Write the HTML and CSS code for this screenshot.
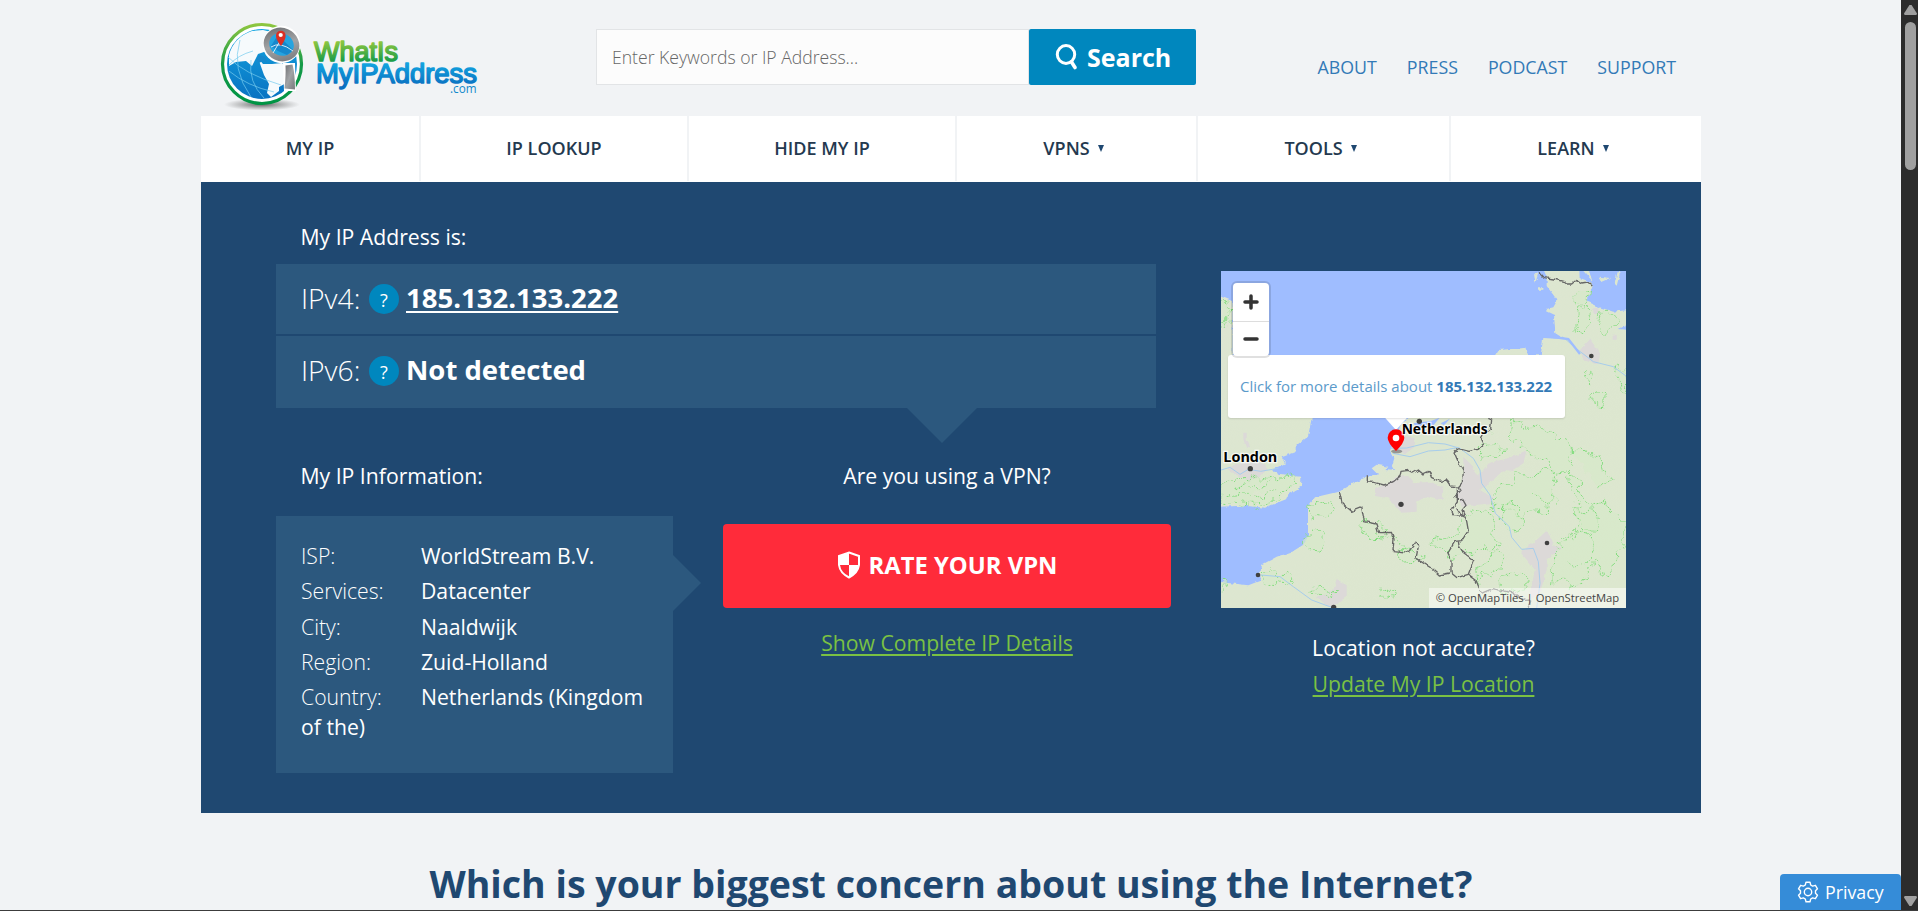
FILE: index.html
```html
<!DOCTYPE html>
<html lang="en">
<head>
<meta charset="utf-8">
<title>What Is My IP Address</title>
<link rel="stylesheet" href="styles.css">
</head>
<body>
<div class="page">
  <div class="container">
    <header class="header">
      <a class="logo">
        <svg width="290" height="100" viewBox="210 10 290 100">
          <defs>
            <linearGradient id="ring" x1="0" y1="0" x2="0" y2="1"><stop offset="0" stop-color="#8dc63f"/><stop offset=".5" stop-color="#159a48"/><stop offset="1" stop-color="#009444"/></linearGradient>
            <linearGradient id="sea" x1="0" y1="0" x2="0" y2="1"><stop offset="0" stop-color="#12a5e0"/><stop offset="1" stop-color="#0a72c2"/></linearGradient>
            <linearGradient id="steel" x1="0" y1="0" x2="1" y2="1"><stop offset="0" stop-color="#6d6e71"/><stop offset=".5" stop-color="#a2a4a6"/><stop offset="1" stop-color="#77787b"/></linearGradient>
            <radialGradient id="shade"><stop offset="0" stop-color="#555" stop-opacity=".9"/><stop offset="1" stop-color="#777" stop-opacity="0"/></radialGradient>
            <linearGradient id="green" gradientUnits="userSpaceOnUse" x1="0" y1="42" x2="0" y2="62"><stop offset="0" stop-color="#8dc63f"/><stop offset="1" stop-color="#159a48"/></linearGradient>
            <linearGradient id="blue" gradientUnits="userSpaceOnUse" x1="0" y1="63" x2="0" y2="86"><stop offset="0" stop-color="#12a5e0"/><stop offset="1" stop-color="#0a6fc0"/></linearGradient>
          </defs>
          <ellipse cx="262" cy="104.500" rx="38" ry="6" fill="url(#shade)"/>
          <circle cx="262" cy="64" r="39.500" fill="#fff" stroke="url(#ring)" stroke-width="3.200"/>
          <circle cx="262" cy="64" r="35" fill="url(#sea)"/>
          <path d="M229 55Q234 37 252 31L263 30 271 32 276 40 268 44 268 50 264 52 258 54 255 60 252 66 246 61 236 62 229 66Z" fill="#f6fafc"/>
          <path d="M258 58L263 64 272 64 282 63 292 72 288 82 279 87 279 91 271 97 267 93 269 84 264 75Z" fill="#f6fafc"/>
          <path d="M228 57Q244 74 281 85M229 71Q247 86 274 92M240 40Q231 69 251 97M251 60Q248 82 264 98M229 65Q238 55 253 51" fill="none" stroke="#75cbee" stroke-width=".7"/>
          <path d="M256 60l3-5 6 2 2 5-4-1-4 2z" fill="#1688cc"/>
          <path d="M283 63H295L296 91H284Z" fill="#fff"/>
          <circle cx="281.500" cy="44.500" r="18.800" fill="#fff"/>
          <ellipse cx="281.500" cy="44.500" rx="15.300" ry="13.800" transform="rotate(25 281.500 44.500)" fill="#25a4e0" stroke="url(#steel)" stroke-width="5.500"/>
          <path d="M271 46l5-8 8 3 9 9-6 5-9-4z" fill="#1688cc"/>
          <path d="M271 47q9-6 22 4M273 53l10-17" fill="none" stroke="#fff" stroke-width=".8"/>
          <path d="M285.500 65.500L292.500 64.500Q295 74 295 89.500L284.500 88.500Q286 75 285.500 65.500Z" fill="url(#steel)"/>
          <path d="M281 46Q275.500 39 276 35.500A4.800 4.800 0 0 1 285.600 35.500Q286 39 281 46Z" fill="#da3024"/>
          <circle cx="280.700" cy="35" r="2.100" fill="#fff"/>
          <text class="logo-text" x="314" y="60.500" textLength="84" lengthAdjust="spacingAndGlyphs" fill="url(#green)" stroke="url(#green)">WhatIs</text>
          <text class="logo-text" x="316" y="82.500" textLength="161" lengthAdjust="spacingAndGlyphs" fill="url(#blue)" stroke="url(#blue)">MyIPAddress</text>
          <text class="logo-com" x="450" y="92.500" textLength="26.500" lengthAdjust="spacingAndGlyphs">.com</text>
        </svg>
      </a>
      <form class="search">
        <div class="search-field">Enter Keywords or IP Address...</div>
        <div class="search-button">
          <svg width="24" height="28" viewBox="0 0 24 28"><ellipse cx="11" cy="11.500" rx="8.700" ry="8.900" fill="none" stroke="#fff" stroke-width="3"/><path d="M16.500 19L20 24.500" stroke="#fff" stroke-width="3.600" stroke-linecap="round"/></svg>
          <span>Search</span>
        </div>
      </form>
      <nav class="top-links"><a>ABOUT</a><a>PRESS</a><a>PODCAST</a><a>SUPPORT</a></nav>
    </header>
    <nav class="main-nav">
      <a>MY IP</a><a>IP LOOKUP</a><a>HIDE MY IP</a>
      <a>VPNS <i class="caret"></i></a><a>TOOLS <i class="caret"></i></a><a>LEARN <i class="caret"></i></a>
    </nav>
    <main class="panel">
      <section class="details">
        <h2 class="label">My IP Address is:</h2>
        <div class="addresses">
          <div class="address"><span class="version">IPv4:</span><span class="help">?</span><a class="ip">185.132.133.222</a></div>
          <div class="address"><span class="version">IPv6:</span><span class="help">?</span><b>Not detected</b></div>
        </div>
        <div class="columns">
          <div class="information">
            <h2 class="label">My IP Information:</h2>
            <div class="info-card">
              <p><span>ISP:</span>WorldStream B.V.</p>
              <p><span>Services:</span>Datacenter</p>
              <p><span>City:</span>Naaldwijk</p>
              <p><span>Region:</span>Zuid-Holland</p>
              <p><span>Country:</span>Netherlands (Kingdom of the)</p>
            </div>
          </div>
          <div class="vpn">
            <p class="question">Are you using a VPN?</p>
            <a class="rate">
              <svg width="24" height="28" viewBox="0 0 24 28"><path d="M12 1.500L22 5V14Q21 22 12 26.500Q3 22 2 14V5Z" fill="none" stroke="#fff" stroke-width="2"/><path d="M12 1.500V14H2V5ZM12 14H22Q21 22 12 26.500Z" fill="#fff"/></svg>
              <span>RATE YOUR VPN</span>
            </a>
            <a class="green-link">Show Complete IP Details</a>
          </div>
        </div>
      </section>
      <aside class="location">
        <div class="map">
          <svg class="map-art" width="405" height="337" viewBox="63 63 1215 1011">
            <defs>
              <linearGradient id="land" x1="0" y1="0" x2="1" y2="1"><stop offset="0" stop-color="#dde5d2"/><stop offset="1" stop-color="#dce7ce"/></linearGradient>
              <filter id="rough" x="0" y="0" width="1" height="1"><feTurbulence type="fractalNoise" baseFrequency=".035" numOctaves="2" seed="4"/><feDisplacementMap in="SourceGraphic" scale="42" xChannelSelector="R" yChannelSelector="G"/></filter>
              <filter id="coast" x="0" y="0" width="1" height="1"><feTurbulence type="fractalNoise" baseFrequency=".06" numOctaves="2" seed="9"/><feDisplacementMap in="SourceGraphic" scale="12" xChannelSelector="R" yChannelSelector="G"/></filter>
            </defs>
            <path fill="#9fbdff" d="M63 63H1278V1074H63Z"/>
            <g fill="url(#land)" filter="url(#coast)">
              <path d="M40 130L98 154V320H240L335 505 324 560 290 585V605L245 622 255 640 215 660 240 675 304 680 303 710 265 733 258 748 195 773 130 767 40 771Z"/>
              <path d="M40 994L145 1006 184 991 177 968 188 943 230 920 280 903 310 884 324 856V770L345 742 415 725 460 698 502 678 540 672 590 677 575 650 583 625 570 603 600 530 625 500 700 480 885 316 895 300 975 294 985 316H1022L1030 264 1095 268 1066 250 1062 195 1038 184 1042 176 1060 172 1072 151 1040 108V80L1022 40H1140L1142 85 1170 95 1178 108 1160 155 1194 170 1240 185 1300 178V216L1256 237 1300 242V1100H40Z"/>
              <path d="M1002 72L1015 70 1006 98ZM1014 112h16v7h-16ZM1150 63l27 30-10-30ZM1198 80l36 4-28 12ZM1243 104l10-38 7 2-10 40Z"/>
              <path d="M515 655L530 644 565 650 556 660 590 664 596 677 565 681 530 670Z"/>
            </g>
            <path d="M640 520l55-8 24-9-18 22-50 8zM722 520l28-14-18 20z" fill="#9fbdff"/>
            <g fill="#dcd9d8" filter="url(#coast)">
              <path d="M80 655L110 640 180 637 205 655 180 680 155 695 115 680Z"/>
              <path d="M525 712L560 704 590 680 625 678 640 700 690 695 730 710 728 750 680 738 650 756 650 785 605 788 565 745 525 738Z"/>
              <path d="M790 620L820 650 835 680 870 638 940 620 980 600 970 640 930 665 910 660 880 690 840 720 882 745 870 760 785 770 770 735 790 690Z"/>
              <path d="M580 605L600 560 640 560 645 590 615 612ZM960 905L1000 880 1042 840 1060 885 1090 895 1040 925 1040 960 1020 1030 985 1050 1005 960Z"/>
              <path d="M1140 300L1170 268 1200 310 1195 345 1150 330ZM350 1040L400 1020 410 990 440 1005 440 1040 390 1074ZM130 548h10v18l8 15v12h-10l-8-25ZM1180 180l15-8v20h-15ZM1238 255l12-4v18h-12Z"/>
            </g>
            <g class="forest" filter="url(#rough)">
              <path d="M63 160l24-5-10 20 18 8-15 20 3 20-20 8M68 710l35-28 30 12 40-14 48 8 48-8 33 17-47 30-24 22-48 20-70-8-45-6zM100 720l48-17 30 14 38-24M80 740l65-14 34 14 52-20"/>
              <path d="M326 770l28-17 42 4 8 25-28 20-45-4zM310 885l10-38 25-6 30 23-8 34-38 2zM478 832l14-24 48 15 30 17-10 24-44-2zM520 850l40 20 24-10 28 40 38 12M590 910l40-10 38 24-30 14-42-4z"/>
              <path d="M790 800l25-20 28 10 20-8 20 40-8 40 20 20-20 18-20-14-35 28-28-13-30 22-38-23-33-20 12-22 50 8 24-20zM885 750l15-50 35 10 14-46 45 14 35-24 33 20-8 38 12 30-26 22 4 22-50-8-32 26-25-24-55 2zM930 510l36 10 10 18 30-7 38 9 50 28 20 40-10 60-40 5-22-40-46-14-24-32-28-12-14-38z"/>
              <path d="M830 620l10-25 48-12 28 18-18 22-36-8-20 14zM1108 670l28 18 4 38 35 40 38-12 20 32 45 34v70l-35 25-10 68-35-13-10-40-20 25-22 45-38 8-15-22-38 20 3-53 20-32-10-28 30-20 33-40-5-35 18-28-28-40zM1080 860l40 12 8-30 40 8 22 36-16 44-47 20-30-8M830 950l35-18 22-38 20 18-7 44-28 20-20-8-18 38zM900 1000l20-28 40-8 25 20-8 30-45 8-30 14z"/>
              <path d="M1122 145l10-20 34 3-4 26-38 8zM1134 188l10-22 28 12-4 32-20 36-20-10zM1198 200l22-18 18 15 18 12-14 22-32 20-14-14zM1154 380l12-18 14 18-14 22zM1176 435l25-10 14 10v32l-38-8zM1255 345l20 18 3 70-15-14-2-28-12-14zM1114 600l34-12 14 22 40 8 5 45 32 18-20 28-28-2M536 1030l10-16 40 12 3 20-45-8zM328 1022l25-8 48 8-8 20-52-4zM180 965l34-5 28 18 24-8 14 22-24 12-38-4-28 10zM63 1000l17 2-17 17"/>
              <path d="M910 765l28-5 24 14-4 28 12 24-22 28-24-18-22-35zM1120 780l35 10 18-20 28 40-18 35-35-7zM1000 730l35 30 20-12 20 20M850 540l23 2M940 515l30 2"/>
            </g>
            <g fill="none" stroke="#a7cdec" stroke-width="3">
              <path d="M63 660L90 652 120 673 145 658 182 664 235 655M570 595L620 594 685 578 735 582 780 595 820 625 840 660 845 700 870 735 886 790 928 830 935 862 965 898 1000 895 1015 935 1020 1000 1010 1074M578 610L630 620 685 603 735 600 775 592M182 975L240 980 280 1010 335 1050 400 1074M1095 266L1125 293 1180 335 1240 350 1278 378"/>
              <path d="M1060 261L1105 267 1140 312" stroke="#9fbdff" stroke-width="7"/>
            </g>
            <g class="border" filter="url(#coast)">
              <path d="M1017 65l16 18 28 4 28 7 11 8 15 0 15-13 15 10 18-3 14 12M418 724l8 35 29 25 30-12 8 43 35 7 8 26 38-1 8 20-3 35 45 5 25-32 7 10-8 40 50 32 20 18 32-6"/>
              <path d="M502 676v20l20 1 30 8 28-10 20-16 3-15 22-3 15 8 15-9 14 12 18-8 7 18 25 12 20-4 13 18 20 3v45l-18 25 6 13 33 2-7-15 12-15-10-18-10 2M865 505l10 5-3 25-22 18-8 15 8 15-15 15-28 6-32-8-13 10 14 32 14 24-3 35-12 14 8 10-22 22"/>
              <path d="M770 775l16 24 12 3 7 40-20 30-20 2-22 36 10 20v38l18 15 34-10 16-42-32-24-12-20-2-15M805 975l24 18 15 37 33-14 60 12 38 23 17-1-8 24"/>
            </g>
            <g fill="#404040"><circle cx="151" cy="656" r="8"/><circle cx="658" cy="514" r="8"/><circle cx="603" cy="763" r="8"/><circle cx="174" cy="975" r="7"/><circle cx="1041" cy="879" r="7"/><circle cx="1174" cy="318" r="7"/><circle cx="401" cy="1072" r="8"/></g>
            <ellipse cx="590" cy="604" rx="17" ry="6" fill="#777" opacity=".7"/>
            <path d="M553 501H623L588 540Z" fill="#fff"/>
            <path d="M588 603Q563 578 563 563A25 25 0 0 1 613 563Q613 578 588 603Z" fill="#f00"/><circle cx="588" cy="564" r="10" fill="#fff"/>
            <text class="place" x="605" y="552" textLength="258" lengthAdjust="spacingAndGlyphs">Netherlands</text>
            <text class="place" x="70" y="636" textLength="162" lengthAdjust="spacingAndGlyphs">London</text>
          </svg>
          <div class="popup">Click for more details about <b>185.132.133.222</b></div>
          <div class="zoom"><span><svg width="16" height="16"><path d="M8 2V14M2 8H14"/></svg></span><span><svg width="16" height="16"><path d="M2 8H14"/></svg></span></div>
          <div class="credits">© OpenMapTiles | OpenStreetMap</div>
        </div>
        <p class="accurate">Location not accurate?</p>
        <a class="green-link">Update My IP Location</a>
      </aside>
    </main>
    <h1 class="concern">Which is your biggest concern about using the Internet?</h1>
  </div>
</div>
<div class="privacy">
  <svg width="22" height="22" viewBox="0 0 22 22" fill="none" stroke="#fff" stroke-width="1.400" stroke-linejoin="round"><path d="M9 1.200H13L13.700 4 15.600 5.100 18.400 4.300 20.500 7.800 18.500 9.800V12.200L20.500 14.200 18.400 17.700 15.600 16.900 13.700 18 13 20.800H9L8.300 18 6.400 16.900 3.600 17.700 1.500 14.200 3.500 12.200V9.800L1.500 7.800 3.600 4.300 6.400 5.100 8.300 4Z"/><circle cx="11" cy="11" r="3.700"/></svg>
  <span>Privacy</span>
</div>
<div class="scrollbar"><i class="arrow-up"></i><i class="thumb"></i><i class="arrow-down"></i></div>
<div class="window-edge"></div>
</body>
</html>
```
FILE: styles.css
```css
* { box-sizing: border-box; }
html, body { margin: 0; height: 911px; overflow: hidden; }
body { background: #f1f3f5; color: #fff; font-family: "Open Sans", "Noto Sans", sans-serif; font-size: 21.200px; }
p, h1, h2 { margin: 0; font-weight: 400; }
.page { width: 1901px; height: 911px; overflow: hidden; }
.container { width: 1500px; margin: 0 auto 0 201px; }

.header { height: 116px; display: flex; align-items: flex-start; }
.logo { width: 395px; padding: 10px 0 0 9px; }
.logo svg { display: block; }
.logo-text { font: 400 27px "Liberation Sans", sans-serif; stroke-width: 1.500px; stroke-linejoin: round; }
.logo-com { font: 400 12.500px "Open Sans", sans-serif; fill: #1089cb; }
.search { display: flex; width: 600px; height: 56px; margin-top: 29px; }
.search-field { width: 433px; height: 56px; padding-left: 15px; border: 1px solid #e2e4e6; background: #fcfcfc; color: #666; font-size: 17.600px; font-weight: 300; line-height: 55px; }
.search-button { width: 167px; height: 56px; display: flex; align-items: center; padding-left: 26px; gap: 8px; border-radius: 2px; background: #0087be; font-size: 25px; font-weight: 700; }
.top-links { display: flex; gap: 30px; margin: 55px 0 0 121.500px; color: #337ab7; font-size: 17.800px; font-weight: 450; line-height: 25px; }

.main-nav { height: 66px; display: grid; grid-template-columns: 220px 268px 268px 241px 253px 250px; background: #fff; color: #24394f; font-size: 18px; font-weight: 620; }
.main-nav a { display: flex; align-items: center; justify-content: center; height: 65px; padding-bottom: 2px; border-right: 2px solid #f1f3f5; }
.main-nav a:last-child { border-right: 0; }
.caret { margin: 2px 6px 0 8px; border: 3.500px solid transparent; border-top: 7px solid #1f4871; border-bottom: 0; }

.panel { height: 631px; display: flex; background: #1f4871; }
.details { width: 895px; padding: 40px 0 0 75px; }
.label { padding-left: 24.500px; font-size: 21.200px; line-height: 30px; }
.addresses { position: relative; width: 880px; margin-top: 12px; }
.addresses::after { content: ""; position: absolute; left: 631px; top: 144px; border: 35px solid transparent; border-top-color: #2c587e; border-bottom: 0; }
.address { height: 70px; padding: 0 25px; display: flex; align-items: center; background: #2c587e; font-size: 27.500px; line-height: 36px; }
.address + .address { height: 72px; margin-top: 2px; padding-bottom: 2px; }
.version { width: 68px; margin-top: -2px; font-size: 28.200px; font-weight: 340; }
.help { width: 30px; height: 30px; margin-right: 7px; border-radius: 50%; background: #0087be; font-size: 18px; line-height: 32px; text-align: center; }
.ip, .address b { margin-top: -2px; font-weight: 700; }
.ip { text-decoration: underline; text-decoration-thickness: 2px; text-underline-offset: 3px; }
.columns { display: flex; gap: 50px; margin-top: 53px; }
.information { flex: none; width: 397px; }
.info-card { position: relative; height: 257px; margin-top: 25px; padding: 25px 25px 0; background: #2c587e; line-height: 30px; }
.info-card::after { content: ""; position: absolute; left: 397px; top: 39px; border: 28.500px solid transparent; border-left-color: #2c587e; border-right: 0; }
.info-card p { margin-bottom: 5.300px; }
.info-card span { display: inline-block; width: 120px; font-weight: 300; }
.vpn { width: 448px; flex: none; text-align: center; }
.question { line-height: 30px; }
.rate { height: 84px; margin: 33px 0 20px; padding-bottom: 3px; display: flex; align-items: center; justify-content: center; gap: 8px; border-radius: 4px; background: #ff2b3a; font-size: 23.800px; font-weight: 700; }
.green-link { color: #7ac143; line-height: 30px; text-decoration: underline; text-decoration-thickness: 2px; text-underline-offset: 3px; }
.location { width: 405px; margin: 89px 0 0 125px; text-align: center; }
.map { position: relative; width: 405px; height: 337px; overflow: hidden; }
.map-art { display: block; }
.forest { fill: #d5e9c8; fill-opacity: .65; stroke: #82dc7d; stroke-width: 3; stroke-dasharray: 6 4; }
.border { fill: none; stroke: #666; stroke-width: 4; stroke-linejoin: round; }
.place { font: 700 41px "Open Sans", sans-serif; fill: #000; stroke: #fff; stroke-width: 7px; stroke-opacity: .8; paint-order: stroke; }
.zoom { position: absolute; left: 12px; top: 12px; width: 36px; height: 73px; border-radius: 4px; background: #fff; box-shadow: 0 0 0 2px rgba(0,0,0,.12); }
.zoom span { height: 38px; display: flex; align-items: center; justify-content: center; }
.zoom span + span { height: 35px; border-top: 1px solid #ddd; }
.zoom path { stroke: #333; stroke-width: 3.500; stroke-linecap: round; }
.popup { position: absolute; left: 7px; top: 84px; width: 337px; height: 63px; padding-left: 12px; border-radius: 3px; background: #fff; box-shadow: 0 1px 2px rgba(0,0,0,.12); color: #5b9aca; font-size: 15px; line-height: 62px; text-align: left; white-space: nowrap; }
.popup b { color: #337ab7; font-weight: 700; }
.credits { position: absolute; right: 0; bottom: 0; width: 197px; height: 20px; background: rgba(255,255,255,.5); color: #444; font-size: 11.250px; line-height: 20px; white-space: nowrap; }
.accurate { margin-top: 24px; line-height: 32px; }
.location .green-link { display: block; margin-top: 5px; }

.concern { margin-top: 42px; color: #1f4871; font-size: 37.500px; font-weight: 700; line-height: 58px; text-align: center; white-space: nowrap; }
.privacy { position: absolute; left: 1780px; top: 874px; width: 121px; height: 36px; display: flex; align-items: center; padding-left: 17px; gap: 6px; border-radius: 4px 4px 0 0; background: #358cd8; font-size: 17.800px; }
.scrollbar { position: absolute; left: 1901px; top: 0; width: 17px; height: 911px; background: #2c2c2c; }
.arrow-up, .arrow-down, .thumb { position: absolute; }
.arrow-up { left: 3px; top: 5px; width: 13px; height: 10px; background: #a0a0a0; clip-path: polygon(42% 0, 58% 0, 100% 85%, 95% 100%, 5% 100%, 0 85%); }
.thumb { left: 4px; top: 22px; width: 11px; height: 148px; border-radius: 6px; background: #a0a0a0; }
.arrow-down { left: 3px; top: 896px; width: 13px; height: 10px; background: #a0a0a0; clip-path: polygon(42% 100%, 58% 100%, 100% 15%, 95% 0, 5% 0, 0 15%); }
.window-edge { position: absolute; left: 0; top: 910px; width: 1918px; height: 1px; background: #3c3c3c; }
```
